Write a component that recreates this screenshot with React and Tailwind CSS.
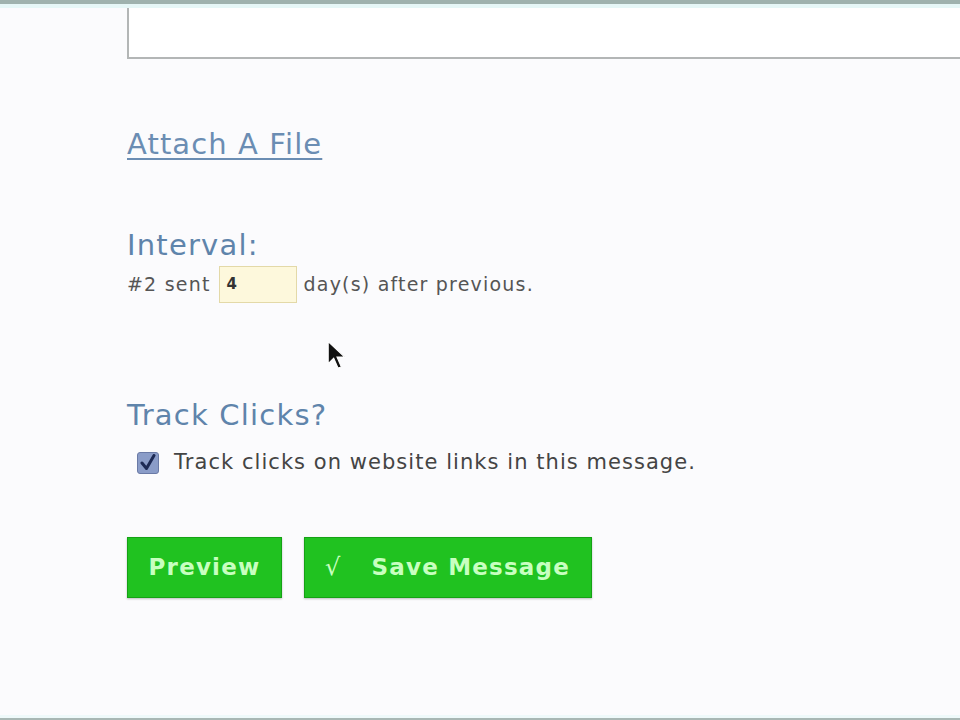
import React from 'react';

const FONT = { fontFamily: '"DejaVu Sans", Verdana, sans-serif' };

function Heading({ children, className = '' }) {
  return (
    <h3 className={`text-[29px] tracking-[1.2px] leading-none text-[#5f84ab] ${className}`}>{children}</h3>
  );
}

function GreenButton({ children, className = '' }) {
  return (
    <button
      className={`h-[61px] bg-[#20c220] border border-[#15a215] shadow-[0_1px_2px_rgba(0,0,0,0.25)] text-[#c8ffc0] text-[23px] tracking-[1.2px] font-bold flex items-center ${className}`}
    >
      {children}
    </button>
  );
}

export default function App() {
  return (
    <div className="w-[960px] h-[720px] bg-[#fbfbfd] flex flex-col overflow-hidden" style={FONT}>
      <div className="h-[4px] bg-[#9fb2ae] shrink-0" />
      <div className="h-[4px] bg-[#e6f7f7] shrink-0" />

      <div className="flex-1 pl-[127px] flex flex-col">
        {/* bottom of the message body textarea */}
        <div className="h-[51px] border-l-2 border-b-2 border-[#b3b6b6] bg-white -mr-4" />

        <a href="#" className="mt-[71px] self-start text-[29px] tracking-[1.1px] leading-none text-[#6b8db3] underline underline-offset-4 decoration-2">
          Attach A File
        </a>

        <Heading className="mt-[72px]">Interval:</Heading>
        <div className="mt-[6px] flex items-center text-[19px] tracking-[1.2px] text-[#555]">
          <span>#2 sent</span>
          <span className="ml-[8px] w-[78px] h-[37px] bg-[#fdf8dc] border border-[#e3d9a8] flex items-center pl-[7px] text-[15px] font-bold text-[#333]">4</span>
          <span className="ml-[7px]">day(s) after previous.</span>
        </div>

        <Heading className="mt-[98px]">Track Clicks?</Heading>
        <div className="mt-[17px] flex items-center text-[21px] tracking-[1.05px] text-[#444]">
          <span className="ml-[10px] w-[22px] h-[22px] rounded-[3px] bg-[#8a9cc8] border border-[#6a7aa6] flex items-center justify-center">
            <svg width="18" height="18" viewBox="0 0 18 18">
              <path d="M3 9 L7.5 14.5 L15 1.5" fill="none" stroke="#1d2a55" strokeWidth="3" strokeLinecap="round" strokeLinejoin="round" />
            </svg>
          </span>
          <span className="ml-[15px]">Track clicks on website links in this message.</span>
        </div>

        <div className="mt-[58px] flex gap-[22px]">
          <GreenButton className="w-[155px] justify-center">Preview</GreenButton>
          <GreenButton className="w-[288px] pl-[20px]">
            <span className="font-normal text-[24px]">√</span>
            <span className="ml-[30px]">Save Message</span>
          </GreenButton>
        </div>
      </div>

      {/* cursor */}
      <div className="relative">
        <svg className="absolute left-[326px] -top-[376px]" width="22" height="34" viewBox="0 0 20 30">
          <path d="M2 2 L2 22 L7 17 L11 26 L14 25 L10 16 L17 16 Z" fill="#111" stroke="#fff" strokeWidth="1" />
        </svg>
      </div>

      <div className="h-[3px] bg-[#eef9fa] shrink-0" />
      <div className="h-[2px] bg-[#a8b7b4] shrink-0" />
    </div>
  );
}
